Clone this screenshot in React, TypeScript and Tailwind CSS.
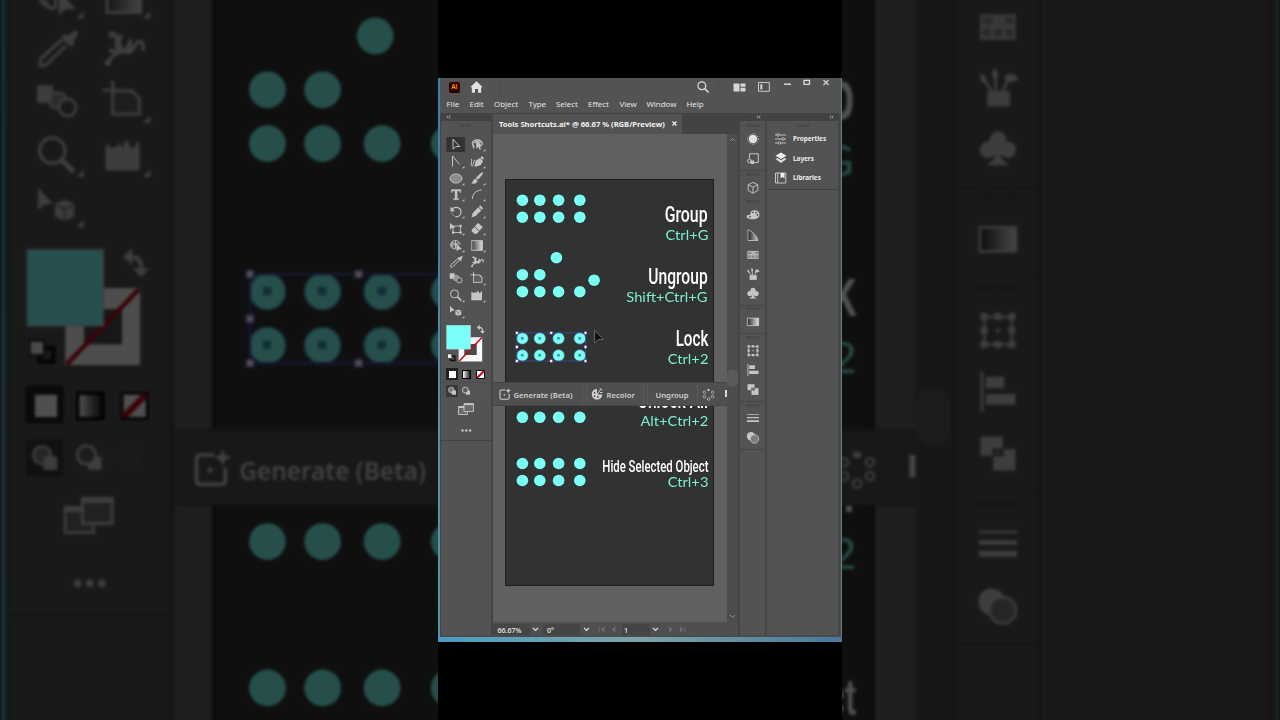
import type { ReactNode } from "react";

const MENU = [
  { label: "File", w: "w-[23px]" },
  { label: "Edit", w: "w-[24.5px]" },
  { label: "Object", w: "w-[34.5px]" },
  { label: "Type", w: "w-[27.5px]" },
  { label: "Select", w: "w-[32px]" },
  { label: "Effect", w: "w-[31.5px]" },
  { label: "View", w: "w-[27px]" },
  { label: "Window", w: "w-[40px]" },
  { label: "Help", w: "w-[24px]" },
];

// Circles on the artboard, centre points
const COLS = [17.4, 34.8, 53.6, 74.8];
const row = (y: number, n = 4) => COLS.slice(0, n).map((x) => [x, y]);
const DOTS = [
  ...row(21.2),
  ...row(38.2),
  [51.4, 78.7],
  ...row(95.7, 2),
  [89.1, 101.2],
  ...row(112.7),
  ...row(221),
  ...row(238.3),
  ...row(284.5),
  ...row(301.5),
];
const SELECTED = [...row(159.4), ...row(176.4)];
const HANDLES = [
  [11.9, 153.9],
  [46.2, 153.9],
  [80.5, 153.9],
  [11.9, 168],
  [80.5, 168],
  [11.9, 182],
  [46.2, 182],
  [80.5, 182],
];

const LABELS = [
  { title: "Group", keys: "Ctrl+G", pos: "top-[22.5px]", size: "text-[22px] scale-x-[0.72]" },
  { title: "Ungroup", keys: "Shift+Ctrl+G", pos: "top-[84.3px]", size: "text-[22px] scale-x-[0.71]" },
  { title: "Lock", keys: "Ctrl+2", pos: "top-[146.3px]", size: "text-[22px] scale-x-[0.69]" },
  { title: "Unlock All", keys: "Alt+Ctrl+2", pos: "top-[208.3px]", size: "text-[22px] scale-x-[0.71]" },
  { title: "Hide Selected Object", keys: "Ctrl+3", pos: "top-[270px]", size: "pt-[8px] text-[16px] scale-x-[0.71]" },
];

const G = "#c6c6c6";

// Tool drawings, centred on (10, 8.5)
const TOOLS: { el: ReactNode; tri?: boolean }[] = [
  { el: <path d="M7 3.2v10l2.8-2.6 4-.1z" fill="none" stroke={G} strokeWidth="1" /> },
  {
    el: (
      <>
        <path d="M6.300 12.500c1-1.200.2-2.200-.5-3.500C4.500 6 6.500 4 10 4s5.800 1.800 5.200 4.800M7.500 9.500c-1.200 1-2.500-.3-1.500-1.800M7 7c1.500-1.500 5-1.500 6.500 0" fill="none" stroke={G} strokeWidth="1.300" />
        <path d="M9.300 4.500v8.300l2-1.800 1.300 2.800 1.400-.7-1.300-2.600 2.800-.2z" fill={G} />
      </>
    ),
    tri: true,
  },
  { el: <path d="M6.500 13.500V3l7 8.500" fill="none" stroke={G} strokeWidth="1" />, tri: true },
  {
    el: (
      <>
        <path d="M7.500 13.300l1.300-5.600 4.200-2.700 3 3.200-2.500 4-5 1.500z" fill={G} />
        <path d="M13.500 4.400l1.500-1.400 2 2.500-1.400 1.300z" fill={G} />
        <path d="M4.500 6c1 1.500-1.500 6 .5 7 2 .5 1-6 3.500-6" fill="none" stroke={G} strokeWidth="1" />
      </>
    ),
    tri: true,
  },
  { el: <ellipse cx="10" cy="8.500" rx="6" ry="4.600" fill="#8c8c8c" stroke={G} strokeWidth=".9" />, tri: true },
  {
    el: <path d="M15.800 2.500c.7.600-2.800 5.500-5 7L9 8.200c1.600-2.200 6-6.500 6.800-5.700zM8.400 8.900l1.800 1.500c.2 2.200-2.500 3.600-5.700 3 1.800-.7 1-3.800 3.900-4.500z" fill={G} stroke={G} strokeWidth=".4" />,
    tri: true,
  },
  { el: <path d="M5.300 3.500h9.600v2.900h-1V5h-2.700v7.500h1.500v1.200H7.500v-1.200H9V5H6.300v1.400h-1z" fill={G} stroke={G} strokeWidth=".3" />, tri: true },
  { el: <path d="M5.500 13c0-5 3-8.500 9-9" fill="none" stroke={G} strokeWidth="1" />, tri: true },
  {
    el: (
      <>
        <path d="M6 6.500c3-4 9-2 9 2.500 0 3-2.500 4.800-5 4.800" fill="none" stroke={G} strokeWidth="1.200" />
        <path d="M6 8.500c-.4 2.500 1.500 5 4 5.300" fill="none" stroke={G} strokeWidth="1" strokeDasharray="1 1" />
        <path d="M4.500 3.500v4.800h4.500z" fill={G} />
      </>
    ),
    tri: true,
  },
  { el: <path d="M13.300 2.300l2.900 2.900-1.500 1.500-2.900-2.900zM11.200 4.300l3.100 3.100-5.600 5.500-4.200 1.500 1.200-4.400z" fill={G} />, tri: true },
  {
    el: (
      <>
        <path d="M7 6h7.500v6.500H7z" fill="none" stroke={G} strokeWidth=".9" />
        <path d="M4 2.800v7l2-1.800 3.200-.3z" fill={G} />
        <path d="M13.500 4.800h2.200V7h-2.200zM13.500 11.500h2.200v2.200h-2.200zM6 11.500h2.200v2.200H6z" fill={G} />
      </>
    ),
    tri: true,
  },
  { el: <path d="M11 2.900l4.900 4.200-3.300 3.600-4.900-4.200zM7.200 7.100l4.900 4.200-2.200 2.500H7.400L4.600 11.300V10z" fill={G} />, tri: true },
  {
    el: (
      <>
        <path d="M14 8c0-2.500-2-4.500-4.600-4.500S4.500 5.500 4.500 8 7 12 9.500 12M5 8h7M9.500 3.500v8.300M6.500 5.500C8 7 11 7 13 5.500M6.500 5c-1 3-.5 5 1 6.500" fill="none" stroke={G} strokeWidth=".9" />
        <path d="M10.500 6.500v7.800l2-1.900 3.500-.2z" fill={G} />
      </>
    ),
    tri: true,
  },
  { el: <rect x="4.800" y="3.700" width="10.600" height="9.600" fill="url(#gradTool)" stroke={G} strokeWidth=".9" />, tri: true },
  {
    el: (
      <>
        <path d="M11.500 5.900L5.300 11.500c-.8 1-.9 2.300-.6 2.600.5.3 1.600 0 2.400-.8l5.800-5.600" fill="none" stroke={G} strokeWidth="1" />
        <path d="M11.600 4.900l.9-.8 1 .6c.8-1 2.300-2 3-1.500.3 1-.5 2.300-1.500 3.200l.5 1-.9.8-1.300-1-1.700-1.500z" fill={G} />
      </>
    ),
  },
  {
    el: (
      <>
        <path d="M5 13.200c1.500-2.800 4-3.900 6.500-3.500 2 .3 1.700-3.200 3.500-3.200 1.300 0 1.300 1.500 1.100 2.800" fill="none" stroke={G} strokeWidth="1.100" />
        <path d="M6.500 4c2.200.5.8 3 1.800 5.500M9.500 4.500c-1.200 1-1.500 3 .4 5M12.500 6c-1 1-1.500 2-1 4.500M5.500 9c3 2 5 0 7.500-1" fill="none" stroke={G} strokeWidth="1.300" />
        <circle cx="5" cy="13.200" r="1" fill={G} />
        <circle cx="6.200" cy="4.300" r=".9" fill={G} />
      </>
    ),
  },
  {
    el: (
      <>
        <rect x="3.700" y="3.300" width="5" height="5.500" fill={G} />
        <rect x="7.800" y="5.600" width="4.800" height="5" rx="1.600" fill="#8c8c8c" stroke={G} strokeWidth=".7" />
        <circle cx="13.300" cy="10.300" r="2.700" fill="#535353" stroke={G} strokeWidth=".9" />
      </>
    ),
  },
  {
    el: (
      <>
        <path d="M6.500 5h6l2.500 2.400v5H6.500z" fill="#606060" stroke={G} strokeWidth=".9" />
        <path d="M3.300 4.800h5M6.500 1.800v5" stroke={G} strokeWidth=".9" />
        <path d="M11.700 4.700h1l2.600 2.500v1z" fill={G} />
      </>
    ),
    tri: true,
  },
  {
    el: (
      <>
        <circle cx="8.500" cy="6.900" r="4" fill="none" stroke={G} strokeWidth="1" />
        <path d="M11.500 9.900l3.800 3.700" stroke={G} strokeWidth="1.700" />
      </>
    ),
    tri: true,
  },
  { el: <path d="M4.300 13.200V5.500l1.200-.8.500 1.600 1-.5 1.200-.4.6-1 .8 1.700 1.300-2.800 1.500 3 1.200-.7.700-1.800.7 1.300v8.100z" fill={G} />, tri: true },
  {
    el: (
      <>
        <path d="M4 2.700v7l2-1.800 2.600-.3z" fill={G} />
        <path d="M9.300 7.700l3.100-1.300 3 1.300v3.900l-3 1.500-3.100-1.500z" fill={G} />
        <path d="M9.500 8.100l2.900 1.300 2.900-1.300M12.400 9.400v3.300" fill="none" stroke="#6a6a6a" strokeWidth=".6" />
      </>
    ),
    tri: true,
  },
];

function Tool({ el, tri, active }: { el: ReactNode; tri?: boolean; active?: boolean }) {
  return (
    <div className="h-[16.720px] w-[20.500px]">
      <svg width="21" height="17" viewBox="0 0 21 17" className="overflow-visible">
        {active && <rect x=".3" y="1" width="18.800" height="15" fill="#333333" />}
        {el}
        {tri && <path d="M18.400 12.900v2.300h-2.300z" fill={G} />}
      </svg>
    </div>
  );
}

function Grip({ className = "" }: { className?: string }) {
  return <div className={`h-[3px] bg-[repeating-linear-gradient(90deg,#454545_0_1px,#505050_1px_2px)] ${className}`} />;
}

function CollapseArrows() {
  return (
    <svg width="5" height="4" viewBox="0 0 5 4">
      <path d="M2.200.5L.8 2l1.400 1.500M4.400.5L3 2l1.400 1.500" fill="none" stroke={G} strokeWidth=".7" />
    </svg>
  );
}

function Toolbar() {
  return (
    <div className="w-[49.500px] shrink-0 bg-[#535353]">
      <div className="flex h-[7.500px] items-center bg-[#424242] pl-[4.500px]">
        <CollapseArrows />
      </div>
      <div className="h-[15.300px] pt-[3px]">
        <Grip className="ml-[18px] w-[12px]" />
      </div>
      <div className="grid grid-cols-[20.500px_20.500px] pl-[5.200px]">
        {TOOLS.map((t, i) => (
          <Tool key={i} el={t.el} tri={t.tri} active={i === 0} />
        ))}
      </div>

      {/* fill and stroke */}
      <svg width="49" height="46.300" viewBox="441 320 49 46.300" className="block">
        <path d="M458.600 337.300h23.600v24.300h-23.600zM464.500 344v11h12v-11z" fill="#f8f8f8" fillRule="evenodd" />
        <rect x="464.500" y="344" width="12" height="11" fill="#4a4a4a" />
        <path d="M459.100 361.300l22.800-23.700" stroke="#c00418" strokeWidth="1.400" />
        <rect x="446.700" y="325.300" width="23.800" height="23.800" fill="#7bfff8" stroke="#a7d9d6" strokeWidth=".6" />
        <path d="M479 327.500c2.700-.2 3.700 1.300 3.600 4" fill="none" stroke={G} strokeWidth="1.300" />
        <path d="M476.800 327.400l2.900-2.600v5.200zM480 331l5 .1-2.500 2.700z" fill={G} />
        <rect x="450.500" y="356.200" width="4.300" height="4.300" fill="#535353" stroke="#111" strokeWidth="1.500" />
        <rect x="447.300" y="353.900" width="4.600" height="4.600" fill="#eee" stroke="#222" strokeWidth=".7" />
      </svg>

      {/* color, gradient, none */}
      <div className="flex h-[16.500px] items-center border-b border-[#4e4e4e] pl-[5px]">
        <div className="flex size-[12px] items-center justify-center bg-[#202020]">
          <div className="size-[7px] bg-white" />
        </div>
        <div className="ml-[3.500px] size-[9px] border border-black bg-linear-to-r from-white to-[#222]" />
        <svg width="9" height="9" viewBox="0 0 9 9" className="ml-[5px]">
          <path d="M.5.500h8v8h-8z" fill="#fff" stroke="#111" />
          <path d="M1 8l7-7" stroke="#c00418" strokeWidth="2" />
        </svg>
      </div>
      {/* draw modes */}
      <div className="flex h-[16px] items-center pl-[5px]">
        <svg width="40" height="12" viewBox="0 0 40 12">
          <path d="M0 0h12v12H0z" fill="#383838" />
          <circle cx="5.300" cy="5" r="2.800" fill="#777" stroke={G} strokeWidth=".8" />
          <rect x="5.800" y="5.500" width="4.200" height="4.200" fill={G} />
          <rect x="19.800" y="5.500" width="4.200" height="4.200" fill={G} />
          <circle cx="19.300" cy="5" r="2.900" fill="#5e5e5e" stroke={G} strokeWidth=".9" />
          <circle cx="33" cy="5.500" r="2.600" fill="none" stroke="#5c5c5c" strokeWidth=".8" />
        </svg>
      </div>
      <div className="flex h-[19.500px] items-center pl-[17.300px]">
        <svg width="16" height="12" viewBox="0 0 16 12">
          <path d="M.5 3.500h9v8h-9z" fill="#6b6b6b" stroke={G} strokeWidth=".9" />
          <path d="M.5 3.500h6v1.500h-6z" fill={G} />
          <path d="M6 .6h9.400v8H6z" fill="#6b6b6b" stroke={G} strokeWidth=".9" />
          <path d="M6 .4h9.400v1.700H6z" fill={G} />
        </svg>
      </div>
      <div className="h-[22.200px] border-b border-[#424242] pt-[10.700px] pl-[20px]">
        <svg width="11" height="3" viewBox="0 0 11 3" className="block">
          <circle cx="1.500" cy="1.500" r="1.200" fill={G} />
          <circle cx="5.300" cy="1.500" r="1.200" fill={G} />
          <circle cx="9.100" cy="1.500" r="1.200" fill={G} />
        </svg>
      </div>
    </div>
  );
}

// Dock drawings, 14 x 14
const DOCK: { key: string; icons: ReactNode[] }[] = [
  {
    key: "color",
    icons: [
      <>
        <circle cx="7" cy="7" r="5.300" fill="none" stroke={G} strokeWidth="1" strokeDasharray=".9 1.200" />
        <circle cx="7" cy="7" r="4.200" fill="#e2e2e2" />
      </>,
      <>
        <path d="M3.500 6.500V1.800h8.800v8.800H8" fill="none" stroke={G} strokeWidth="1" />
        <circle cx="3.500" cy="9" r="1.900" fill="none" stroke={G} strokeWidth="1" />
        <path d="M4 8.500h4v3.500H5z" fill={G} />
      </>,
    ],
  },
  {
    key: "3d",
    icons: [<path d="M7 1.400l4.800 2.300v5.800L7 12.200 2.200 9.500V3.700zM2.200 3.700L7 6.200l4.800-2.500M7 6.200v6" fill="none" stroke={G} strokeWidth=".9" />],
  },
  {
    key: "swatches",
    icons: [
      <>
        <path d="M7.500 2.200c3.500-.3 6 1.300 6 4.300 0 3.300-3.500 4.800-7 4.800C3 11.300.5 10 .5 8.200c0-1.500 2-1.200 3.500-1.500C5.500 6.300 3 3 7.500 2.200z" fill={G} />
        <circle cx="7" cy="4.300" r=".9" fill="#555" />
        <circle cx="10" cy="4.700" r=".9" fill="#555" />
        <circle cx="11.500" cy="7" r=".9" fill="#555" />
        <circle cx="4" cy="8.800" r=".9" fill="#555" />
      </>,
      <>
        <path d="M2 12.500V1.800c4.500 1.500 8.500 5.500 10 10.700z" fill="url(#gradGuide)" stroke={G} strokeWidth=".8" />
      </>,
      <>
        <path d="M1.300 3.900h11.300v8H1.300z" fill="#b5b5b5" />
        <path d="M2.200 4.900h3v2h-3zM9.300 4.900h2.400v2H9.300zM2.200 8.500h2.500v2.200H2.200zM5.800 8.500h2.500v2.200H5.800zM9.500 8.500h2.200v2.200H9.500z" fill="#848484" />
      </>,
      <>
        <path d="M3.600 8.200h7.200v4.700H3.600z" fill={G} />
        <path d="M5 8.200L2.500 4.200M6.500 8.200L6 3.200M8.500 8.200l2-4.500" stroke={G} strokeWidth=".9" />
        <path d="M1.300 2.700c2 0 2.600 2 1.700 3.200C1.800 5.400 1.300 4.200 1.300 2.700zM5.800 1c1.500.7 1.700 2.700.5 3.700C4.900 3.700 4.900 2 5.800 1zM9 3.800c1.300-2 4-1.300 4.500.9-1.500-.3-2.500 1.300-3.900.5z" fill={G} />
      </>,
      <>
        <circle cx="7" cy="4.400" r="2.600" fill={G} />
        <circle cx="3.900" cy="7.600" r="2.600" fill={G} />
        <circle cx="10.100" cy="7.600" r="2.600" fill={G} />
        <path d="M6.300 6.400h1.400l.3 4 2.700 2.100H3.300L6 10.400z" fill={G} />
      </>,
    ],
  },
  { key: "gradient", icons: [<rect x="1.300" y="3.100" width="11.400" height="7.600" fill="url(#gradDock)" stroke={G} strokeWidth=".8" />] },
  {
    key: "transform",
    icons: [
      <>
        <path d="M2.700 2.400h8.600V11H2.700z" fill="none" stroke={G} strokeWidth=".8" />
        <path d="M1.500 1.200h2.200v2.200H1.500zM5.900 1.200h2.200v2.200H5.900zM10.300 1.200h2.200v2.200h-2.200zM1.500 5.600h2.200v2.200H1.500zM10.300 5.600h2.200v2.200h-2.200zM1.500 10h2.200v2.200H1.500zM5.900 10h2.200v2.200H5.900zM10.300 10h2.200v2.200h-2.200zM6.400 6.100h1.200v1.200H6.400z" fill={G} />
      </>,
      <path d="M1.500.8h.9v12.400h-.9zM3.200 2.300h5.700v3.600H3.200zM3.200 7.700h9.300v3.400H3.200z" fill={G} />,
      <>
        <path d="M1.500 1.200h7v6h-7z" fill={G} />
        <path d="M5.500 5.200h7v6.700h-7z" fill={G} />
        <path d="M5.500 5.200h3v2h-3z" fill="#777" stroke="#535353" strokeWidth=".6" />
      </>,
    ],
  },
  {
    key: "stroke",
    icons: [
      <path d="M1 2.900h12v.8H1zM1 5.900h12v1.400H1zM1 9.200h12v1.900H1z" fill={G} />,
      <>
        <circle cx="5" cy="5.300" r="4.200" fill={G} />
        <circle cx="8.500" cy="8" r="4.200" fill="#7c7c7c" stroke={G} strokeWidth=".8" />
      </>,
    ],
  },
];

const DOCK_HEAD: Record<string, string> = {
  color: "h-[8.500px] pt-[3px]",
  stroke: "h-[6.200px] pt-[1.500px]",
};

function IconDock() {
  return (
    <div className="w-[25.500px] shrink-0 bg-[#535353]">
      <div className="flex h-[7.500px] items-center justify-end bg-[#424242] pr-[4px]">
        <CollapseArrows />
      </div>
      {DOCK.map((s) => (
        <div key={s.key} className={`flex flex-col items-center pb-[1.500px] pl-px ${s.key === "3d" ? "" : "border-b border-[#464646]"}`}>
          <div className={DOCK_HEAD[s.key] ?? "h-[6.800px] pt-[1.500px]"}>
            <Grip className="w-[13px]" />
          </div>
          {s.icons.map((ic, k) => (
            <div key={k} className="flex h-[19.500px] items-center">
              <svg width="14" height="14" viewBox="0 0 14 14">{ic}</svg>
            </div>
          ))}
        </div>
      ))}
    </div>
  );
}

const PANELS = [
  {
    name: "Properties",
    icon: (
      <>
        <path d="M1 3h11M1 7h11M1 11h11" stroke={G} strokeWidth=".9" />
        <circle cx="4" cy="3" r="1.300" fill="#535353" stroke={G} strokeWidth=".8" />
        <circle cx="9" cy="7" r="1.300" fill="#535353" stroke={G} strokeWidth=".8" />
        <circle cx="5.500" cy="11" r="1.300" fill="#535353" stroke={G} strokeWidth=".8" />
      </>
    ),
  },
  {
    name: "Layers",
    icon: (
      <>
        <path d="M7 1.500l5.500 3.200L7 8 1.500 4.700z" fill="#eee" />
        <path d="M1.500 8l2-1L7 9.200 10.500 7l2 1L7 12z" fill="#ddd" />
      </>
    ),
  },
  {
    name: "Libraries",
    icon: (
      <>
        <path d="M1.500 2h10.300v10H1.500zM3.700 2v10" fill="none" stroke={G} strokeWidth="1" />
        <path d="M6.500 2h4v5.500l-2-1.500-2 1.500z" fill="#eee" />
      </>
    ),
  },
];

function PanelDock() {
  return (
    <div className="w-[70.500px] shrink-0 bg-[#535353]">
      <div className="flex h-[7.500px] items-center justify-end bg-[#424242] pr-[4px]">
        <CollapseArrows />
      </div>
      <div className="border-b-[1.500px] border-[#404040] pb-px">
        <div className="h-[8.200px] pt-[2.500px]">
          <Grip className="mx-auto w-[13px]" />
        </div>
        {PANELS.map((p) => (
          <div key={p.name} className="flex h-[19.500px] items-center pl-[6.500px]">
            <svg width="14" height="14" viewBox="0 0 14 14">{p.icon}</svg>
            <span className="ml-[5.500px] pt-px text-[6.400px] leading-none font-bold text-[#ededed] group-data-backdrop:hidden">{p.name}</span>
          </div>
        ))}
      </div>
    </div>
  );
}

function TitleBar() {
  return (
    <div className="flex h-[18.500px] items-center">
      <div className="ml-[8.500px] flex size-[11.500px] items-center justify-center rounded-[2px] bg-[#330000] text-[6.500px] leading-none font-semibold text-[#ff9a00]">
        <span className="group-data-backdrop:hidden">Ai</span>
      </div>
      <svg width="13" height="12" viewBox="0 0 13 12" className="ml-[9.500px]">
        <path d="M6.500.3l6.300 6h-1.600v5.400H8V8H5v3.700H1.800V6.300H.2z" fill="#e0e0e0" />
      </svg>
      <div className="ml-[16px] h-[14px] w-px bg-[#4d4d4d]" />
      <svg width="12" height="12" viewBox="0 0 12 12" className="ml-[197.500px]">
        <circle cx="4.800" cy="4.700" r="3.900" fill="none" stroke="#dcdcdc" strokeWidth="1.200" />
        <path d="M7.600 7.500l4 4" stroke="#dcdcdc" strokeWidth="1.600" />
      </svg>
      <div className="ml-[8.500px] h-[14px] w-px bg-[#4d4d4d]" />
      <svg width="13" height="9" viewBox="0 0 13 9" className="ml-[14.500px]">
        <path d="M.5.500h6v8h-6zM7.500.500h5v3.300h-5zM7.500 4.800h5v3.700h-5z" fill="#d6d6d6" />
      </svg>
      <svg width="12" height="10" viewBox="0 0 12 10" className="ml-[11.500px]">
        <path d="M.5.500h10.800v8.800H.5z" fill="none" stroke="#d6d6d6" strokeWidth=".9" />
        <path d="M2.300 2.300h2v5.200h-2z" fill="#d6d6d6" />
      </svg>
      <svg width="48" height="8" viewBox="0 0 48 8" className="mb-[9px] ml-[13px]">
        <path d="M1 5.200h7" stroke="#dcdcdc" strokeWidth="1.400" />
        <path d="M21 1.300h5.500v4H21z" fill="none" stroke="#dcdcdc" strokeWidth="1.300" />
        <path d="M40.500 1l5 5M45.500 1l-5 5" stroke="#dcdcdc" strokeWidth="1.100" />
      </svg>
    </div>
  );
}

function Artboard() {
  return (
    <div className="absolute top-[45px] left-[12px] h-[407.500px] w-[209.500px] border border-[#1d1f1f] bg-[#303332]">
      <svg width="209" height="407" viewBox="1 1 209 407" className="absolute inset-0">
        {DOTS.map(([x, y], i) => (
          <circle key={i} cx={x} cy={y} r="5.800" fill="#7bfff5" />
        ))}
        {SELECTED.map(([x, y], i) => (
          <g key={i}>
            <circle cx={x} cy={y} r="5.600" fill="#7bfff5" stroke="#5cc9ee" strokeWidth=".5" />
            <rect x={x - 1.5} y={y - 1.5} width="2.700" height="2.700" fill="#3c97b0" />
          </g>
        ))}
        <path d="M11.900 153.900h68.600V182H11.900z" fill="none" stroke="#4b4cae" strokeWidth=".7" />
        {HANDLES.map(([x, y], i) => (
          <rect key={i} x={x - 1.2} y={y - 1.2} width="2.400" height="2.400" fill="#fff" stroke="#6b62d8" strokeWidth=".4" />
        ))}
        <path d="M89.700 151.500v12.500l3.500-3.400 5.200-.3z" fill="#0c0c0c" stroke="#8a8a8a" strokeWidth=".7" />
      </svg>
      {LABELS.map((l) => (
        <div key={l.title} className={`absolute right-[5px] flex flex-col items-end ${l.pos}`}>
          <div className={`flex h-[26.200px] origin-right items-center leading-none font-medium whitespace-nowrap text-white font-[Roboto,sans-serif] ${l.size}`}>
            {l.title}
          </div>
          <div className="flex h-[15px] origin-right scale-x-[1.090] items-center text-[13.500px] leading-none whitespace-nowrap text-[#7df0d4] font-[Lato,sans-serif]">
            {l.keys}
          </div>
        </div>
      ))}
    </div>
  );
}

function TaskBar() {
  return (
    <div className="absolute top-[248.500px] left-0 flex h-[24px] w-[234.500px] items-center overflow-hidden border-y border-[#464646] bg-[#4f4f4f] text-[7.700px] leading-none font-semibold text-[#d0d0d0]">
      <div className="flex h-[19px] w-[90px] shrink-0 items-center border-r border-[#5a5a5a] pl-[6.500px]">
        <svg width="12" height="12" viewBox="0 0 12 12">
          <path d="M6.500 2H2.300C1.300 2 1 2.500 1 3.300V10c0 .8.400 1.200 1.300 1.200h6.500c.9 0 1.300-.4 1.300-1.200V6" fill="none" stroke="#cfcfcf" strokeWidth="1.100" />
          <path d="M9.300.2l.8 1.900 1.900.7-1.900.8-.8 1.900-.8-1.900-1.900-.8 1.900-.7zM5.300 5.400l.4 1 1 .4-1 .4-.4 1-.4-1-1-.4 1-.4z" fill="#cfcfcf" />
        </svg>
        <span className="ml-[2.500px] pt-[3px] whitespace-nowrap">Generate (Beta)</span>
      </div>
      <div className="ml-[3px] flex h-[19px] w-[58px] shrink-0 items-center border-x border-[#5a5a5a] pl-[4.500px]">
        <svg width="12" height="12" viewBox="0 0 12 12">
          <path d="M6 1C3 1 .8 3.200.8 6.200S3 11.500 6 11.500s5.200-2 5.200-5H8L6 6z" fill="#cfcfcf" />
          <circle cx="3.500" cy="4.800" r=".9" fill="#4d4d4d" />
          <circle cx="3.700" cy="8.200" r=".9" fill="#4d4d4d" />
          <circle cx="7" cy="9" r=".9" fill="#4d4d4d" />
          <path d="M6 6.500l3.500-5M8.800.5l2.500 1.500M9 4.500h2.500" stroke="#cfcfcf" strokeWidth="1" />
        </svg>
        <span className="ml-[3.500px] pt-[3px] group-data-backdrop:hidden">Recolor</span>
      </div>
      <div className="ml-[3px] flex h-[19px] w-[51px] shrink-0 items-center justify-center border-x border-[#5a5a5a] pt-[3px]">
        <span className="group-data-backdrop:hidden">Ungroup</span>
      </div>
      <svg width="13" height="13" viewBox="0 0 13 13" className="mt-px ml-[4.500px] shrink-0">
        <g fill="none" stroke="#bdbdbd" strokeWidth=".8">
          <circle cx="6.500" cy="11" r="1.300" />
          <circle cx="2.400" cy="8.700" r="1.300" />
          <circle cx="10.600" cy="8.700" r="1.300" />
          <circle cx="2.400" cy="4.300" r="1.300" />
          <circle cx="10.600" cy="4.300" r="1.300" />
        </g>
        <rect x="5.200" y=".9" width="2.600" height="2" rx=".8" fill="#c6c6c6" />
      </svg>
      <div className="mb-px ml-auto h-[7px] w-[2px] bg-[#d8d8d8]" />
    </div>
  );
}

function Chevron() {
  return (
    <svg width="7" height="5" viewBox="0 0 7 5" className="shrink-0">
      <path d="M1 1l2.500 2.500L6 1" fill="none" stroke="#e0e0e0" strokeWidth="1.200" />
    </svg>
  );
}

function StatusBar() {
  return (
    <div className="flex h-[13px] items-center bg-[#4f4f4f] pt-px text-[7px] leading-none font-medium text-[#ededed]">
      <div className="flex h-[11px] w-[38.500px] items-center bg-[#454545] pt-[2.500px] pl-[5px]">
        <span className="group-data-backdrop:hidden">66.67%</span>
      </div>
      <div className="flex w-[12px] pt-px pl-[1px]"><Chevron /></div>
      <div className="flex h-[11px] w-[36.500px] items-center bg-[#454545] pt-[2.500px] pl-[4px]">
        <span className="group-data-backdrop:hidden">0°</span>
      </div>
      <div className="flex w-[17px] pt-px pl-[3px]"><Chevron /></div>
      <svg width="24" height="7" viewBox="0 0 24 7" className="shrink-0">
        <path d="M1.500.500h1v6h-1zM7.500.500v6l-4-3zM18.500.500v6l-4-3z" fill="#6d6d6d" />
      </svg>
      <div className="ml-px flex h-[11px] w-[28px] items-center bg-[#454545] pt-[2.500px] pl-[2.500px]">
        <span className="group-data-backdrop:hidden">1</span>
      </div>
      <div className="flex w-[17px] pt-px pl-[2px]"><Chevron /></div>
      <svg width="24" height="7" viewBox="0 0 24 7" className="shrink-0">
        <path d="M2 .5v6l4-3zM13 .5v6l4-3zM17.500.500h1v6h-1z" fill="#6d6d6d" />
      </svg>
    </div>
  );
}

function Document() {
  return (
    <div className="flex min-w-0 flex-1 flex-col">
      <div className="flex h-[20px] shrink-0 bg-[#434343]">
        <div className="flex h-full w-[189.500px] items-center bg-[#535353] pl-[6.500px] text-[7.600px] leading-none font-bold whitespace-nowrap text-[#f2f2f2]">
          <span className="pt-[2px] group-data-backdrop:hidden">Tools Shortcuts.ai* @ 66.67 % (RGB/Preview)</span>
          <svg width="5" height="5" viewBox="0 0 5 5" className="ml-[7px]">
            <path d="M.5.500l4 4M4.500.500l-4 4" stroke="#f2f2f2" strokeWidth="1.100" />
          </svg>
        </div>
      </div>
      <div className="flex flex-1">
        <div className="relative w-[234.500px] shrink-0 bg-[#606060]">
          <Artboard />
          <TaskBar />
        </div>
        <div className="flex flex-1 flex-col items-center bg-[#4c4c4c] pt-[3px] pb-[3px]">
          <svg width="7" height="5" viewBox="0 0 7 5">
            <path d="M1 4l2.500-2.500L6 4" fill="none" stroke="#999" strokeWidth=".9" />
          </svg>
          <div className="mt-[227px] h-[18px] w-full rounded-full bg-[#5a5a5a]" />
          <svg width="7" height="5" viewBox="0 0 7 5" className="mt-auto">
            <path d="M1 1l2.500 2.500L6 1" fill="none" stroke="#999" strokeWidth=".9" />
          </svg>
        </div>
      </div>
      <StatusBar />
    </div>
  );
}

// The whole portrait recording: letterbox, desktop edge, application window
function Recording() {
  return (
    <div className="flex h-[720px] w-[404px] flex-col bg-black pt-[78px] font-['Noto_Sans','Open_Sans',sans-serif]">
      <div className="flex h-[559px]">
        <div className="w-[2px] bg-linear-to-b from-[#3c7fa8] from-25% via-[#5b8f9e] via-60% to-[#4698b0]" />
        <div className="flex w-[400.500px] flex-col bg-[#535353]">
          <TitleBar />
          <div className="flex h-[16px] items-center pt-[1.500px] pl-[6.500px] text-[7.900px] leading-none text-[#e4e4e4]">
            {MENU.map((m) => (
              <div key={m.label} className={m.w}>
                <span className="group-data-backdrop:hidden">{m.label}</span>
              </div>
            ))}
          </div>
          <div className="flex h-[522.500px] gap-[2px] border-t-[1.500px] border-[#434343] bg-[#454545] pl-px">
            <Toolbar />
            <Document />
            <IconDock />
            <PanelDock />
            <div className="w-px bg-[#4d4d4d]" />
          </div>
          <div className="flex-1 bg-[#4b4b4b]" />
        </div>
        <div className="w-[1.500px] bg-[#5d7f8c]" />
      </div>
      <div className="h-[4.500px] bg-linear-to-r from-[#4a9cc4] via-[#7da3a8] to-[#47799c]" />
    </div>
  );
}

export default function App() {
  return (
    <div className="relative flex h-[720px] w-[1280px] justify-center overflow-hidden bg-black">
      {/* shared gradients */}
      <svg width="0" height="0" className="absolute">
        <defs>
          <linearGradient id="gradTool">
            <stop offset="0" stopColor="#444" />
            <stop offset="1" stopColor="#ddd" />
          </linearGradient>
          <linearGradient id="gradDock">
            <stop offset="0" stopColor="#2a2a2a" />
            <stop offset="1" stopColor="#e6e6e6" />
          </linearGradient>
          <linearGradient id="gradGuide">
            <stop offset="0" stopColor="#222" />
            <stop offset="1" stopColor="#ccc" />
          </linearGradient>
        </defs>
      </svg>

      {/* dimmed enlargement behind the recording, labels it never reveals stay hidden */}
      <div aria-hidden data-backdrop="true" className="group absolute inset-0 flex scale-[3.168] justify-center opacity-[0.31] blur-[0.5px]">
        <Recording />
      </div>
      <div className="relative">
        <Recording />
      </div>
    </div>
  );
}
